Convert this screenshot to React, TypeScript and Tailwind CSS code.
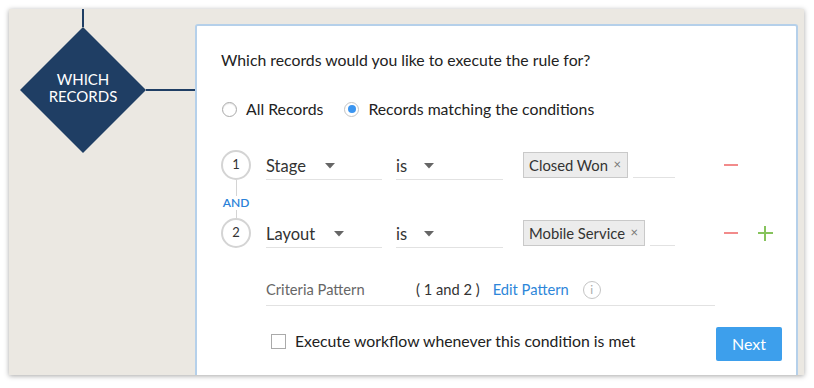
import React from 'react';

const Caret = () => (
  <svg width="10" height="6" viewBox="0 0 10 6" className="shrink-0">
    <path d="M0 0 L10 0 L5 5.5 Z" fill="#666" />
  </svg>
);

const Select = ({ label, width, caretGap }: { label: string; width: string; caretGap: string }) => (
  <div className={`flex h-[30px] items-center border-b border-[#e2e2e2] pt-[3px] text-[16.5px] ${width}`}>
    <span className={caretGap}>{label}</span>
    <Caret />
  </div>
);

const Tag = ({ label, width, fill }: { label: string; width: string; fill: string }) => (
  <div className="flex w-[152px] items-end">
    <div className={`flex h-[26px] items-center justify-between border border-[#c9c9c9] bg-[#ececec] pl-[5px] pr-[6px] text-[14.8px] ${width}`}>
      <span>{label}</span>
      <span className="text-[13px] text-[#777]">×</span>
    </div>
    <div className={`ml-[5px] h-px bg-[#e2e2e2] ${fill}`} />
  </div>
);

const Minus = () => <div className="h-[2px] w-[14px] bg-[#f28b8b]" />;

const Plus = () => (
  <div className="relative h-[15px] w-[15px]">
    <div className="absolute left-0 top-[6px] h-[2px] w-[15px] bg-[#86c35c]" />
    <div className="absolute left-[6px] top-0 h-[15px] w-[2px] bg-[#86c35c]" />
  </div>
);

const Num = ({ n }: { n: number }) => (
  <div className="flex h-[30px] w-[30px] shrink-0 items-center justify-center rounded-full border-2 border-[#d4d4d4] text-[13px] text-[#333]">
    {n}
  </div>
);

const App = () => {
  return (
    <div className="h-[388px] w-[814px] bg-white pl-[9px] pt-[9px] font-['Lato',sans-serif] text-[#222]">
      <div className="flex h-[366px] w-[795px] overflow-hidden bg-[#ebe8e2] shadow-[0_1px_5px_rgba(0,0,0,0.35)]">
        {/* flow diagram node */}
        <div className="flex w-[186px] shrink-0 flex-col">
          <div className="ml-[73px] h-[18px] w-[2px] bg-[#1f3e64]" />
          <div className="flex items-center">
            <div className="ml-[11px] flex h-[126px] w-[126px] shrink-0 flex-col items-center justify-center bg-[#1f3e64] pb-[4px] text-center text-[15px] leading-[17px] text-white [clip-path:polygon(50%_0,100%_50%,50%_100%,0_50%)]">
              <span>WHICH</span>
              <span>RECORDS</span>
            </div>
            <div className="h-[2px] flex-1 bg-[#1f3e64]" />
          </div>
        </div>

        {/* criteria card */}
        <div className="mt-[15px] flex w-[603px] shrink-0 flex-col rounded-tl-[3px] rounded-tr-[3px] border-2 border-b-0 border-[#b5d0ea] bg-white text-[15.8px]">
          <div className="pl-[24px] pt-[24px] leading-[20px]">Which records would you like to execute the rule for?</div>

          <div className="mt-[29px] flex items-center pl-[25px] leading-[20px]">
            <div className="h-[15px] w-[15px] rounded-full border border-[#aaa] shadow-[inset_0_1px_1px_rgba(0,0,0,0.1)]" />
            <span className="ml-[9px]">All Records</span>
            <div className="ml-[21px] flex h-[15px] w-[15px] items-center justify-center rounded-full border border-[#c4c4c4]">
              <div className="h-[8px] w-[8px] rounded-full bg-[#3b95f0]" />
            </div>
            <span className="ml-[9px]">Records matching the conditions</span>
          </div>

          <div className="mt-[31px] flex items-center pl-[24px] text-[#333]">
            <Num n={1} />
            <Select label="Stage" width="ml-[15px] w-[116px]" caretGap="mr-[19px]" />
            <Select label="is" width="ml-[14px] w-[107px]" caretGap="mr-[17px]" />
            <div className="ml-[20px]">
              <Tag label="Closed Won" width="w-[105px]" fill="w-[42px]" />
            </div>
            <div className="ml-[49px]">
              <Minus />
            </div>
          </div>

          <div className="ml-[24px] flex w-[30px] flex-col items-center">
            <div className="h-[16px] w-px bg-[#d4d4d4]" />
            <span className="text-[12px] font-semibold leading-[14px] text-[#2a82d8]">AND</span>
            <div className="h-[8px] w-px bg-[#d4d4d4]" />
          </div>

          <div className="flex items-center pl-[24px] text-[#333]">
            <Num n={2} />
            <Select label="Layout" width="ml-[15px] w-[116px]" caretGap="mr-[19px]" />
            <Select label="is" width="ml-[14px] w-[107px]" caretGap="mr-[17px]" />
            <div className="ml-[20px]">
              <Tag label="Mobile Service" width="w-[122px]" fill="w-[25px]" />
            </div>
            <div className="ml-[49px]">
              <Minus />
            </div>
            <div className="ml-[20px]">
              <Plus />
            </div>
          </div>

          <div className="ml-[69px] mt-[26px] flex h-[32px] w-[449px] items-center border-b border-[#e2e2e2] text-[14.7px]">
            <span className="w-[150px] text-[#666]">Criteria Pattern</span>
            <span className="text-[#333]">( 1 and 2 )</span>
            <span className="ml-[13px] text-[#2d86d9]">Edit Pattern</span>
            <div className="ml-[14px] flex h-[18px] w-[18px] items-center justify-center rounded-full border border-[#c4c4c4] text-[12px] leading-none text-[#aaa]">
              i
            </div>
          </div>

          <div className="mt-[21px] flex items-center justify-between pl-[74px] pr-[14px]">
            <div className="mb-[6px] flex items-center">
              <div className="h-[15px] w-[15px] border border-[#aaa]" />
              <span className="ml-[9px]">Execute workflow whenever this condition is met</span>
            </div>
            <button className="flex h-[34px] w-[66px] items-center justify-center rounded-[2px] bg-[#3d9fec] text-[16px] text-white">
              Next
            </button>
          </div>
        </div>
      </div>
    </div>
  );
};

export default App;
